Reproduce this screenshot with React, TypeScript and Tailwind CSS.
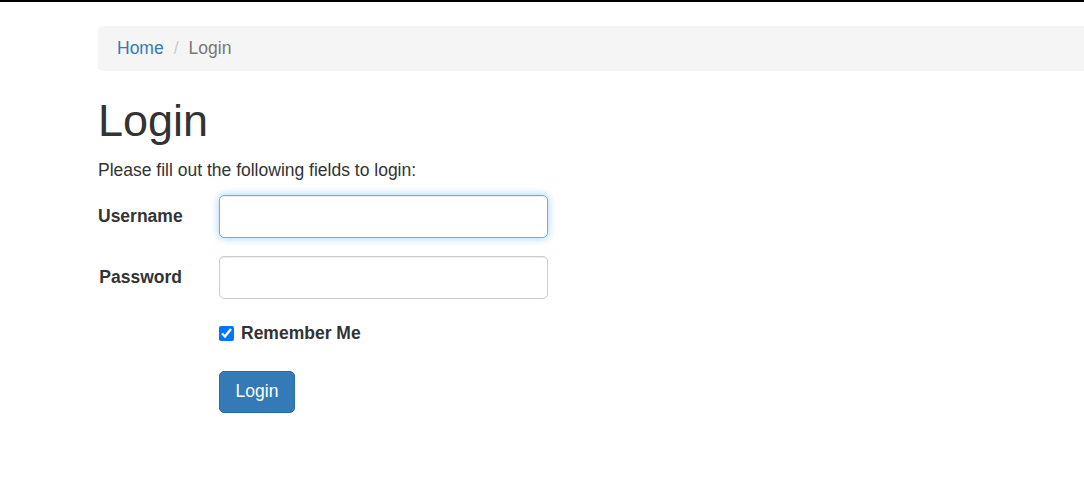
export default function App() {
  return (
    <div className="min-h-[498px] bg-white text-[#333] font-['Liberation_Sans',Arial,sans-serif] text-[17.5px] leading-[25px]">
      <div className="h-[2px] bg-black" />
      <div className="pl-[98px]">
        <ol className="mt-[24px] flex h-[45px] items-center rounded-l-[5px] bg-[#f5f5f5] px-[19px]">
          <li>
            <a href="#" className="text-[#337ab7]">Home</a>
          </li>
          <li className="px-[10px] text-[#ccc]">/</li>
          <li className="text-[#777]">Login</li>
        </ol>

        <h1 className="mt-[25px] text-[45px] leading-[49.5px] font-normal">Login</h1>
        <p className="mt-[12.5px]">Please fill out the following fields to login:</p>

        <form className="mt-[11.5px]" onSubmit={e => e.preventDefault()}>
          <div className="flex items-center">
            <label className="w-[84px] text-right font-bold">Username</label>
            <input
              type="text"
              className="ml-[37px] h-[43px] w-[329px] rounded-[5px] border border-[#66afe9] px-[15px] outline-none shadow-[inset_0_1px_1px_rgba(0,0,0,0.075),0_0_8px_rgba(102,175,233,0.6)]"
            />
          </div>
          <div className="mt-[18px] flex items-center">
            <label className="w-[84px] text-right font-bold">Password</label>
            <input
              type="password"
              className="ml-[37px] h-[43px] w-[329px] rounded-[5px] border border-[#ccc] px-[15px] outline-none shadow-[inset_0_1px_1px_rgba(0,0,0,0.075)]"
            />
          </div>
          <div className="mt-[22px] flex items-center pl-[121px]">
            <input type="checkbox" defaultChecked className="h-[15px] w-[15px] accent-[#0075ff]" />
            <label className="ml-[7px] font-bold">Remember Me</label>
          </div>
          <div className="mt-[25px] pl-[121px]">
            <button
              type="submit"
              className="h-[42px] w-[76px] rounded-[5px] border border-[#2e6da4] bg-[#337ab7] text-white"
            >
              Login
            </button>
          </div>
        </form>
      </div>
    </div>
  )
}
